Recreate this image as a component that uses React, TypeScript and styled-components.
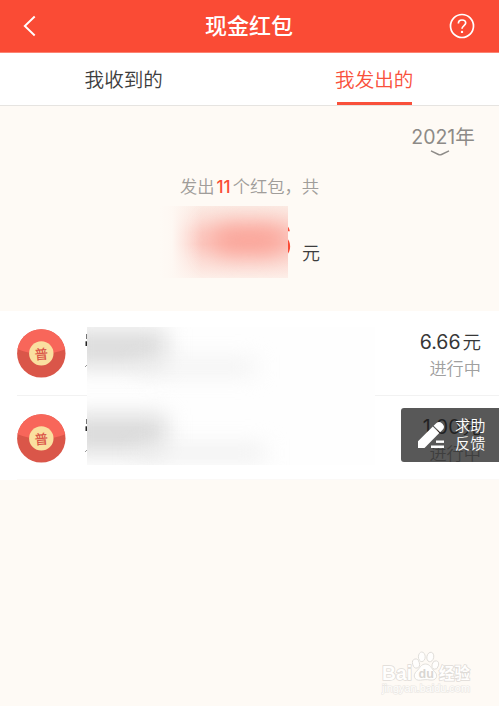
import React from 'react';
import styled, { createGlobalStyle } from 'styled-components';

const GlobalStyle = createGlobalStyle`
  * { box-sizing: border-box; }
  body {
    margin: 0;
    background: #fefaf5;
    font-family: Inter, "Noto Sans CJK SC", sans-serif;
    font-weight: 350;
  }
`;

const Screen = styled.div`
  position: relative;
  width: 499px;
  height: 706px;
  overflow: hidden;
  background: #fefaf5;
`;

const Header = styled.header`
  display: flex;
  align-items: center;
  justify-content: space-between;
  height: 53px;
  padding: 0 24px 0 23px;
  background: #fa4b35;
  border-bottom: 1px solid #fc8372;
`;

const HeaderSlot = styled.div<{ $end?: boolean }>`
  display: flex;
  width: 26px;
  justify-content: ${(p) => (p.$end ? 'flex-end' : 'flex-start')};
`;

const Title = styled.h1`
  margin: 0;
  font-size: 22px;
  line-height: 30px;
  font-weight: 500;
  color: #fff;
`;

const Tabs = styled.nav`
  display: grid;
  grid-template-columns: 1fr 1fr;
  height: 53px;
  background: #fff;
  border-bottom: 1px solid #e6e4e1;
`;

const Tab = styled.div<{ $active?: boolean }>`
  display: flex;
  justify-content: center;
  padding-right: ${(p) => (p.$active ? '0' : '2px')};
  color: ${(p) => (p.$active ? '#f9503b' : '#3d3d3d')};
`;

const TabLabel = styled.span<{ $active?: boolean }>`
  display: flex;
  justify-content: center;
  width: 75px;
  height: 52px;
  font-size: 19.6px;
  line-height: 54px;
  white-space: nowrap;
  border-bottom: ${(p) => (p.$active ? '3px solid #f9503b' : '0')};
`;

const Summary = styled.section`
  height: 205px;
  padding-top: 18px;
`;

const Year = styled.div`
  display: flex;
  flex-direction: column;
  align-items: center;
  width: 66px;
  height: 32px;
  margin-left: 410px;
  color: #8d8a87;
  white-space: nowrap;

  svg { margin-right: 6px; }
`;

const YearText = styled.span`
  font-size: 19.5px;
  font-weight: 400;
  line-height: 26px;
`;

const Count = styled.p`
  margin: 18px 0 0;
  text-align: center;
  font-size: 17.3px;
  line-height: 26px;
  color: #a09d9a;

  b {
    margin: 0 2px;
    font-size: 17px;
    font-weight: 500;
    color: #fa4b35;
  }
`;

const Amount = styled.div`
  position: relative;
  display: flex;
  align-items: baseline;
  justify-content: flex-end;
  width: 160px;
  height: 72px;
  margin: 6px 0 0 160px;
`;

const Digit = styled.span`
  margin-right: 9px;
  font-size: 52px;
  line-height: 70px;
  font-weight: 500;
  color: #fa4b35;
`;

const Unit = styled.span`
  position: relative;
  top: 1px;
  font-size: 18px;
  color: #3d3d3d;
`;

const AmountMask = styled.div`
  position: absolute;
  left: 0;
  top: 0;
  width: 128px;
  height: 72px;
  background:
    linear-gradient(90deg, #fefaf5 0, #fef8f3 12px, rgba(254, 248, 243, 0) 42px),
    linear-gradient(180deg, #fbebe4 0, #fce0d9 12px, #fccdc5 27px, #fcc9c1 38px, #fcdcd5 53px, #fdefe9 72px);
  overflow: hidden;

  &::after {
    content: '';
    position: absolute;
    left: 52px;
    top: 20px;
    width: 74px;
    height: 28px;
    border-radius: 12px;
    background: #faa094;
    filter: blur(12px);
  }
`;

const List = styled.section`
  position: relative;
  height: 169px;
  padding-left: 17px;
  background: #fff;
`;

const Row = styled.div`
  display: flex;
  align-items: flex-start;
  height: 85px;
  padding: 18px 18px 0 0;
  border-bottom: 1px solid #f2f2f2;

  &:nth-of-type(2) { height: 84px; border-color: #fbf9f7; }
`;

const Person = styled.div`
  flex: 1;
  margin-left: 19px;
`;

const Value = styled.div`
  text-align: right;
  font-size: 19.5px;
  font-weight: 400;
  line-height: 26px;
  color: #373737;
`;

const Yuan = styled.span`
  margin-left: 2px;
  font-size: 18.5px;
  font-weight: 350;
`;

const Status = styled.div`
  font-size: 17.2px;
  font-weight: 350;
  line-height: 28px;
  color: #a0a0a0;
`;

const PrivacyMask = styled.div`
  position: absolute;
  left: 87px;
  top: 16px;
  width: 288px;
  height: 138px;
  overflow: hidden;
  background: #fefefe;
`;

const Smudge = styled.div<{ $x: number; $y: number; $w: number; $h: number; $c: string }>`
  position: absolute;
  left: ${(p) => p.$x}px;
  top: ${(p) => p.$y}px;
  width: ${(p) => p.$w}px;
  height: ${(p) => p.$h}px;
  background: ${(p) => p.$c};
  filter: blur(11px);
`;

const Feedback = styled.aside`
  position: absolute;
  right: 0;
  top: 408px;
  display: flex;
  align-items: center;
  gap: 9px;
  width: 98px;
  height: 54px;
  padding-left: 16px;
  border-radius: 3px 0 0 3px;
  background: rgba(26, 26, 26, .73);
  color: #fff;
  font-size: 15.2px;
  line-height: 18.5px;
`;

const Watermark = styled.div`
  position: absolute;
  left: 381px;
  top: 651px;
`;

function Avatar({ id }: { id: string }) {
  return (
    <svg width="49" height="49" viewBox="0 0 49 49">
      <clipPath id={id}><circle cx="24.3" cy="24.4" r="24.2" /></clipPath>
      <g clipPath={`url(#${id})`}>
        <rect width="49" height="49" fill="#da5649" />
        <path d="M0 0H49V20Q24.5 30 0 20Z" fill="#f8665a" />
      </g>
      <circle cx="24.3" cy="24.4" r="12.2" fill="#fae0a0" />
      <text x="24.3" y="30.2" textAnchor="middle" fontSize="13.5" fontWeight="500" fill="#da5649"
        transform="rotate(-5 24 24)" fontFamily="Noto Sans CJK SC, sans-serif">普</text>
    </svg>
  );
}

function PaymentRow({ id, amount }: { id: string; amount: string }) {
  return (
    <Row>
      <Avatar id={id} />
      <Person>
        <svg width="10" height="44" viewBox="0 0 10 44">
          <path d="M1.5 5V10" stroke="#777" />
          <path d="M0.5 12.3H3V17H0.5Z" fill="#222" />
          <path d="M0 38L2.5 35.5" stroke="#999" />
        </svg>
      </Person>
      <Value>
        {amount}<Yuan>元</Yuan>
        <Status>进行中</Status>
      </Value>
    </Row>
  );
}

export default function App() {
  return (
    <Screen>
      <GlobalStyle />
      <Header>
        <HeaderSlot>
          <svg width="14" height="22" viewBox="0 0 14 22" fill="none" stroke="#fff" strokeWidth="1.9">
            <path d="M11.7 1.5L1.8 11L11.7 20.5" />
          </svg>
        </HeaderSlot>
        <Title>现金红包</Title>
        <HeaderSlot $end>
          <svg width="26" height="26" viewBox="0 0 26 26" fill="none" stroke="#fff" strokeWidth="1.7">
            <circle cx="13" cy="13" r="11.5" />
            <path d="M9.4 10.4C9.4 8.2 10.9 7 13 7C15.1 7 16.7 8.3 16.7 10.1C16.7 12.5 13 12.8 13 15.8" />
            <circle cx="13" cy="18.9" r="1.2" fill="#fff" stroke="none" />
          </svg>
        </HeaderSlot>
      </Header>
      <Tabs>
        <Tab><TabLabel>我收到的</TabLabel></Tab>
        <Tab $active><TabLabel $active>我发出的</TabLabel></Tab>
      </Tabs>
      <Summary>
        <Year>
          <YearText>2021年</YearText>
          <svg width="20" height="6" viewBox="0 0 20 6" fill="none" stroke="#8d8a87" strokeWidth="1.4">
            <path d="M1 .8L8.5 4.5Q10 5.2 11.5 4.5L19 .8" />
          </svg>
        </Year>
        <Count>发出<b>11</b>个红包，共</Count>
        <Amount>
          <Digit>6</Digit>
          <Unit>元</Unit>
          <AmountMask />
        </Amount>
      </Summary>
      <List>
        <PaymentRow id="packet-one" amount="6.66" />
        <PaymentRow id="packet-two" amount="1.00" />
        <PrivacyMask>
          <Smudge $x={-20} $y={2} $w={99} $h={38} $c="#dcdcdc" />
          <Smudge $x={50} $y={34} $w={118} $h={12} $c="#eeeeee" />
          <Smudge $x={-20} $y={88} $w={99} $h={38} $c="#dadada" />
          <Smudge $x={50} $y={119} $w={128} $h={14} $c="#eeeeee" />
        </PrivacyMask>
      </List>
      <Feedback>
        <svg width="29" height="28" viewBox="0 0 29 28" fill="#fff">
          <path d="M1 27V20.3L15.8 5.6L22.3 12.1L7.5 27Z" />
          <path d="M16.6 4.8L19.2 2.2C21 .5 23.2.6 24.8 2.2L25.6 3C27.4 4.8 27.5 6.8 25.8 8.6L23.2 11.3Z" />
          <rect x="19" y="19.5" width="8" height="2.4" />
          <rect x="14" y="24.5" width="13" height="2.5" />
        </svg>
        <div>求助<br />反馈</div>
      </Feedback>
      <Watermark>
        <svg width="92" height="44" viewBox="0 0 92 44" fill="#fffefd" stroke="#dedbd7" strokeWidth=".9">
          <g fontFamily="Liberation Sans, Noto Sans CJK SC, sans-serif" paintOrder="stroke">
            <text x="1" y="28.5" fontSize="19.5" fontWeight="700" textLength="30" lengthAdjust="spacingAndGlyphs" strokeWidth="1.5">Bai</text>
            <text x="58" y="28" fontSize="15.5" fontWeight="700" textLength="31" strokeWidth="1.5">经验</text>
            <text x="1" y="40.5" fontSize="10.5" stroke="#e9e6e2" strokeWidth="1.2" textLength="88" lengthAdjust="spacingAndGlyphs">jingyan.baidu.com</text>
          </g>
          <ellipse cx="35" cy="12.5" rx="3.4" ry="4.6" transform="rotate(-15 35 12.5)" />
          <ellipse cx="40.8" cy="5.8" rx="3.4" ry="4.8" />
          <ellipse cx="49.3" cy="6" rx="3.4" ry="4.8" transform="rotate(12 49.3 6)" />
          <ellipse cx="54.3" cy="14" rx="3.2" ry="4.3" transform="rotate(15 54.3 14)" />
          <path d="M44.5 13C49 13 50 17 53.5 20.5C58 25 55 30 49 29C45 28.3 43 28.7 39.5 29.2C33 30 31.5 24 35.5 20.3C39 17 40 13 44.5 13Z" />
          <text x="37.5" y="26.5" fontSize="12.5" fontWeight="700" fill="#d9d6d2" stroke="none"
            fontFamily="Liberation Sans, sans-serif">du</text>
        </svg>
      </Watermark>
    </Screen>
  );
}
